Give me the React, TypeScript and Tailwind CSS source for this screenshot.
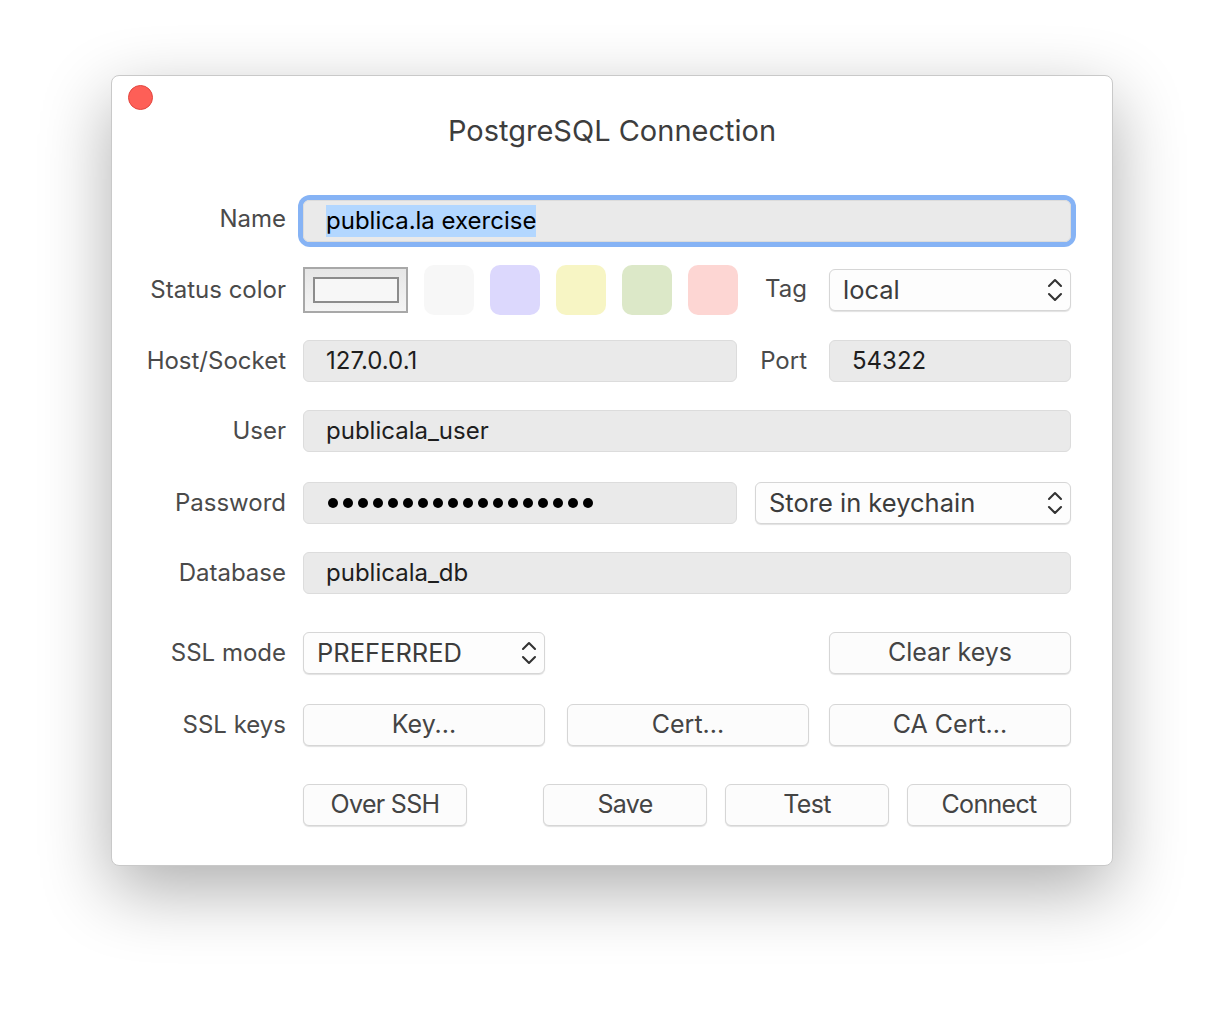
import React from "react";

const font = { fontFamily: "Inter, 'Noto Sans', 'Liberation Sans', sans-serif" };

function Chevrons() {
  return (
    <svg width="16" height="28" viewBox="0 0 16 28" fill="none" stroke="#333" strokeWidth="2.1" strokeLinecap="round" strokeLinejoin="round">
      <polyline points="2,10 8,4 14,10" />
      <polyline points="2,18 8,24 14,18" />
    </svg>
  );
}

function Label({ children, className = "" }: { children: React.ReactNode; className?: string }) {
  return <div className={`text-[24px] text-[#4a4a4a] text-right leading-none ${className}`}>{children}</div>;
}

function Field({ children, className = "" }: { children?: React.ReactNode; className?: string }) {
  return (
    <div className={`h-[42px] rounded-[6px] bg-[#eaeaea] border border-[#dcdcdc] flex items-center pl-[22px] text-[24px] text-[#1e1e1e] ${className}`}>
      {children}
    </div>
  );
}

function Select({ value, className = "" }: { value: string; className?: string }) {
  return (
    <div className={`h-[42px] rounded-[6px] bg-[#fdfdfd] border border-[#d6d6d6] shadow-[0_1px_1px_rgba(0,0,0,0.12)] flex items-center justify-between pl-[13px] pr-[7px] text-[25.5px] text-[#3c3c3c] ${className}`}>
      <span>{value}</span>
      <Chevrons />
    </div>
  );
}

function Button({ children, className = "" }: { children: React.ReactNode; className?: string }) {
  return (
    <div className={`h-[42px] rounded-[6px] bg-[#fcfcfc] border border-[#d6d6d6] shadow-[0_1px_1px_rgba(0,0,0,0.12)] flex items-center justify-center text-[25px] text-[#444] ${className}`}>
      {children}
    </div>
  );
}

function Row({ label, children, className = "", labelClass = "pb-[1px]" }: { label?: string; children: React.ReactNode; className?: string; labelClass?: string }) {
  return (
    <div className={`flex items-center ${className}`}>
      <Label className={`w-[174px] shrink-0 ${labelClass}`}>{label}</Label>
      <div className="ml-[17px] flex-1 flex items-center">{children}</div>
    </div>
  );
}

export default function App() {
  const dots = Array.from({ length: 18 });
  return (
    <div className="w-[1224px] h-[1014px] bg-white pt-[75px] pl-[111px]" style={font}>
      <div className="w-[1002px] h-[791px] bg-white rounded-[8px] border border-[#c9c9c9] shadow-[0_24px_70px_rgba(0,0,0,0.32)] pr-[41px] flex flex-col">
        <div className="h-[124px] relative">
          <div className="absolute left-[16px] top-[9px] w-[25px] h-[25px] rounded-full bg-[#fe5f57] border border-[#e2463f]" />
          <div className="pt-[33px] pl-[41px] text-center text-[29px] text-[#3d3d3d]">PostgreSQL Connection</div>
        </div>

        <Row label="Name" className="h-[42px]" labelClass="pb-[5px]">
          <div className="flex-1 rounded-[7px] ring-[5px] ring-[#86b3f5]">
            <Field className="border-[#7fa8e8]">
              <span className="bg-[#b3d7ff] text-black leading-[32px]">publica.la exercise</span>
            </Field>
          </div>
        </Row>

        <Row label="Status color" className="h-[50px] mt-[23px]">
          <div className="w-[105px] h-[46px] border-2 border-[#a8a8a8] bg-gradient-to-b from-[#e6e6e6] to-[#f4f4f4] flex items-center justify-center">
            <div className="w-[86px] h-[26px] border-2 border-[#8c8c8c] bg-[#f7f7f7]" />
          </div>
          <div className="ml-[16px] flex gap-[16px]">
            <div className="w-[50px] h-[50px] rounded-[10px] bg-[#f7f7f7]" />
            <div className="w-[50px] h-[50px] rounded-[10px] bg-[#dcd8fd]" />
            <div className="w-[50px] h-[50px] rounded-[10px] bg-[#f7f5c4]" />
            <div className="w-[50px] h-[50px] rounded-[10px] bg-[#dce8c8]" />
            <div className="w-[50px] h-[50px] rounded-[10px] bg-[#fdd6d3]" />
          </div>
          <Label className="flex-1 pr-[22px] pb-[3px]">Tag</Label>
          <Select value="local" className="w-[242px]" />
        </Row>

        <Row label="Host/Socket" className="h-[42px] mt-[25px]">
          <Field className="w-[434px]">127.0.0.1</Field>
          <Label className="flex-1 pr-[22px] pb-[1px]">Port</Label>
          <Field className="w-[242px]">54322</Field>
        </Row>

        <Row label="User" className="h-[42px] mt-[28px]">
          <Field className="flex-1">publicala_user</Field>
        </Row>

        <Row label="Password" className="h-[42px] mt-[30px]">
          <Field className="w-[434px] pl-[24px]">
            <div className="flex gap-[5px]">
              {dots.map((_, i) => (
                <div key={i} className="w-[10px] h-[10px] rounded-full bg-black" />
              ))}
            </div>
          </Field>
          <Select value="Store in keychain" className="ml-[18px] flex-1" />
        </Row>

        <Row label="Database" className="h-[42px] mt-[28px]">
          <Field className="flex-1">publicala_db</Field>
        </Row>

        <Row label="SSL mode" className="h-[42px] mt-[38px]">
          <Select value="PREFERRED" className="w-[242px]" />
          <div className="flex-1" />
          <Button className="w-[242px]">Clear keys</Button>
        </Row>

        <Row label="SSL keys" className="h-[42px] mt-[30px]">
          <Button className="w-[242px]">Key...</Button>
          <Button className="w-[242px] ml-[22px]">Cert...</Button>
          <Button className="w-[242px] ml-[20px]">CA Cert...</Button>
        </Row>

        <Row className="h-[42px] mt-[38px]">
          <Button className="w-[164px] tracking-[-0.7px]">Over SSH</Button>
          <div className="flex-1" />
          <div className="flex gap-[18px]">
            <Button className="w-[164px] tracking-[-0.7px]">Save</Button>
            <Button className="w-[164px] tracking-[-0.7px]">Test</Button>
            <Button className="w-[164px] tracking-[-0.7px]">Connect</Button>
          </div>
        </Row>
      </div>
    </div>
  );
}
